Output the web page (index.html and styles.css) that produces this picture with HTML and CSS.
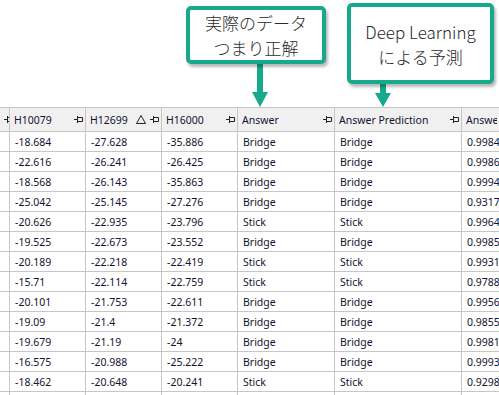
FILE: index.html
```html
<!DOCTYPE html>
<html lang="ja">
<head>
<meta charset="utf-8">
<link rel="stylesheet" href="styles.css">
</head>
<body>
<div class="page">
  <div class="annotations">
    <div class="callout callout-truth">
      <span>実際のデータ</span>
      <span>つまり正解</span>
    </div>
    <div class="callout callout-pred">
      <span>Deep Learning</span>
      <span>による予測</span>
    </div>
    <svg class="arrows" width="499" height="108" viewBox="0 0 499 108">
      <rect x="257" y="62" width="6" height="31" fill="#16a98b"/>
      <polygon points="252,92 268,92 260,107" fill="#16a98b"/>
      <rect x="380" y="82" width="6" height="12" fill="#16a98b"/>
      <polygon points="375,93 391,93 383,107" fill="#16a98b"/>
    </svg>
  </div>
  <div class="grid">
    <div class="hd"><span class="lbl"></span><svg class="pin" width="9" height="7" viewBox="0 0 9 7"><path d="M0 3.5H3M3.5 0V7M3.5 1.5H8.5V5.5H3.5" fill="none" stroke="#222" stroke-width="1"/></svg></div>
    <div class="hd"><span class="lbl">H10079</span><svg class="pin" width="9" height="7" viewBox="0 0 9 7"><path d="M0 3.5H3M3.5 0V7M3.5 1.5H8.5V5.5H3.5" fill="none" stroke="#222" stroke-width="1"/></svg></div>
    <div class="hd"><span class="lbl">H12699</span><svg class="tri" width="10" height="9" viewBox="0 0 10 9"><path d="M5 0.5L9.5 8.5H0.5Z" fill="none" stroke="#222" stroke-width="1"/></svg><svg class="pin" width="9" height="7" viewBox="0 0 9 7"><path d="M0 3.5H3M3.5 0V7M3.5 1.5H8.5V5.5H3.5" fill="none" stroke="#222" stroke-width="1"/></svg></div>
    <div class="hd"><span class="lbl">H16000</span><svg class="pin" width="9" height="7" viewBox="0 0 9 7"><path d="M0 3.5H3M3.5 0V7M3.5 1.5H8.5V5.5H3.5" fill="none" stroke="#222" stroke-width="1"/></svg></div>
    <div class="hd"><span class="lbl">Answer</span><svg class="pin" width="9" height="7" viewBox="0 0 9 7"><path d="M0 3.5H3M3.5 0V7M3.5 1.5H8.5V5.5H3.5" fill="none" stroke="#222" stroke-width="1"/></svg></div>
    <div class="hd"><span class="lbl">Answer Prediction</span><svg class="pin" width="9" height="7" viewBox="0 0 9 7"><path d="M0 3.5H3M3.5 0V7M3.5 1.5H8.5V5.5H3.5" fill="none" stroke="#222" stroke-width="1"/></svg></div>
    <div class="hd last"><span class="lbl">Answer Probability</span></div>

    <div class="c"></div><div class="c">-18.684</div><div class="c">-27.628</div><div class="c">-35.886</div><div class="c">Bridge</div><div class="c">Bridge</div><div class="c last">0.998493</div>
    <div class="c"></div><div class="c">-22.616</div><div class="c">-26.241</div><div class="c">-26.425</div><div class="c">Bridge</div><div class="c">Bridge</div><div class="c last">0.998632</div>
    <div class="c"></div><div class="c">-18.568</div><div class="c">-26.143</div><div class="c">-35.863</div><div class="c">Bridge</div><div class="c">Bridge</div><div class="c last">0.999461</div>
    <div class="c"></div><div class="c">-25.042</div><div class="c">-25.145</div><div class="c">-27.276</div><div class="c">Bridge</div><div class="c">Bridge</div><div class="c last">0.931728</div>
    <div class="c"></div><div class="c">-20.626</div><div class="c">-22.935</div><div class="c">-23.796</div><div class="c">Stick</div><div class="c">Stick</div><div class="c last">0.996412</div>
    <div class="c"></div><div class="c">-19.525</div><div class="c">-22.673</div><div class="c">-23.552</div><div class="c">Bridge</div><div class="c">Bridge</div><div class="c last">0.998545</div>
    <div class="c"></div><div class="c">-20.189</div><div class="c">-22.218</div><div class="c">-22.419</div><div class="c">Stick</div><div class="c">Stick</div><div class="c last">0.993108</div>
    <div class="c"></div><div class="c">-15.71</div><div class="c">-22.114</div><div class="c">-22.759</div><div class="c">Stick</div><div class="c">Stick</div><div class="c last">0.978821</div>
    <div class="c"></div><div class="c">-20.101</div><div class="c">-21.753</div><div class="c">-22.611</div><div class="c">Bridge</div><div class="c">Bridge</div><div class="c last">0.995603</div>
    <div class="c"></div><div class="c">-19.09</div><div class="c">-21.4</div><div class="c">-21.372</div><div class="c">Bridge</div><div class="c">Bridge</div><div class="c last">0.985524</div>
    <div class="c"></div><div class="c">-19.679</div><div class="c">-21.19</div><div class="c">-24</div><div class="c">Bridge</div><div class="c">Bridge</div><div class="c last">0.998197</div>
    <div class="c"></div><div class="c">-16.575</div><div class="c">-20.988</div><div class="c">-25.222</div><div class="c">Bridge</div><div class="c">Bridge</div><div class="c last">0.999392</div>
    <div class="c"></div><div class="c">-18.462</div><div class="c">-20.648</div><div class="c">-20.241</div><div class="c">Stick</div><div class="c">Stick</div><div class="c last">0.929831</div>
    <div class="c"></div><div class="c">-17.903</div><div class="c">-20.512</div><div class="c">-21.066</div><div class="c">Bridge</div><div class="c">Bridge</div><div class="c last">0.997215</div>
  </div>
</div>
</body>
</html>
```
FILE: styles.css
```css
html, body {
  margin: 0;
  padding: 0;
  background: #ffffff;
}
.page {
  width: 499px;
  height: 395px;
  overflow: hidden;
  font-family: "Noto Sans", "Open Sans", sans-serif;
}
.annotations {
  position: relative;
  height: 107px;
}
.arrows {
  position: absolute;
  left: 0;
  top: 0;
}
.callout {
  position: absolute;
  box-sizing: border-box;
  border: 4px solid #16a98b;
  border-radius: 5px;
  background: #ffffff;
  box-shadow: 2px 3px 3px rgba(0, 0, 0, 0.28);
  display: flex;
  flex-direction: column;
  align-items: center;
  justify-content: center;
  font-family: "Noto Sans CJK JP", "Noto Sans", sans-serif;
  font-weight: 300;
  color: #2a2a2a;
  font-size: 17px;
  line-height: 25px;
  z-index: 1;
}
.callout-truth {
  left: 186px;
  top: 6px;
  width: 140px;
  height: 58px;
}
.callout-pred {
  left: 347px;
  top: 3px;
  width: 147px;
  height: 81px;
}
.grid {
  display: grid;
  grid-template-columns: 10px 76px 76px 76px 97px 127px 1fr;
  border-top: 1px solid #c6c6c6;
  font-size: 10.5px;
  color: #14122e;
}
.hd, .c {
  box-sizing: border-box;
  border-right: 1px solid #c6c6c6;
  border-bottom: 1px solid #c6c6c6;
  white-space: nowrap;
  overflow: hidden;
  display: flex;
  align-items: center;
}
.hd {
  height: 24px;
  background: #f0f0f0;
  padding: 0 2px 0 4px;
  gap: 4px;
}
.hd .lbl {
  flex: 1;
  overflow: hidden;
}
.hd:first-child {
  padding: 0 1px 0 0;
}
.c {
  height: 20px;
  padding: 0 0 0 5px;
  background: #ffffff;
}
.last {
  border-right: none;
}
.pin, .tri {
  flex: none;
  display: block;
}
```
